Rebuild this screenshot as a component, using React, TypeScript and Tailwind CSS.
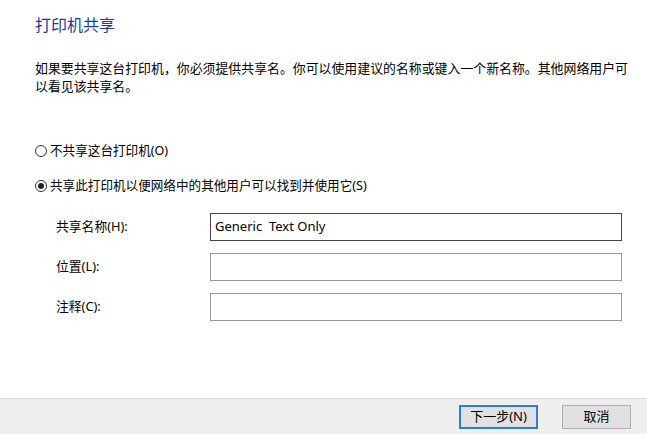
import React from "react";

const font = { fontFamily: '"Noto Sans", "Noto Sans CJK SC", sans-serif' };

function Radio({ checked }: { checked?: boolean }) {
  return (
    <span className="w-[12px] h-[12px] rounded-full border border-[#333] bg-white flex items-center justify-center shrink-0">
      {checked && <span className="w-[6px] h-[6px] rounded-full bg-[#222]" />}
    </span>
  );
}

function Field({ label, value, dark }: { label: string; value?: string; dark?: boolean }) {
  return (
    <div className="flex items-center h-[28px]">
      <div className="w-[210px] shrink-0 pl-[56px] text-[12.8px] text-black whitespace-nowrap">{label}</div>
      <div
        className={`w-[412px] h-[28px] border ${dark ? "border-[#444]" : "border-[#9a9a9a]"} bg-white flex items-center pl-[4px] text-[13px] text-black whitespace-pre`}
      >
        {value}
      </div>
    </div>
  );
}

export default function App() {
  return (
    <div className="w-[647px] h-[444px] bg-white flex flex-col" style={font}>
      <div className="flex-1 flex flex-col">
        <div className="pl-[35px] pt-[14px] text-[16px] leading-[22px] text-[#1c3c9c]">打印机共享</div>
        <div className="pl-[35px] mt-[23px] w-[640px] text-[12.9px] leading-[18px] text-black">
          如果要共享这台打印机，你必须提供共享名。你可以使用建议的名称或键入一个新名称。其他网络用户可以看见该共享名。
        </div>
        <div className="pl-[35px] mt-[46px] h-[20px] flex items-center gap-[3px] text-[12.6px] text-black">
          <Radio />
          <span>不共享这台打印机(O)</span>
        </div>
        <div className="pl-[35px] mt-[15px] h-[20px] flex items-center gap-[3px] text-[12.6px] text-black">
          <Radio checked />
          <span>共享此打印机以便网络中的其他用户可以找到并使用它(S)</span>
        </div>
        <div className="mt-[17px] flex flex-col gap-[12px]">
          <Field label="共享名称(H):" value="Generic  Text Only" dark />
          <Field label="位置(L):" />
          <Field label="注释(C):" />
        </div>
      </div>
      <div className="h-[36px] bg-[#efefef] border-t border-[#dcdcdc] flex items-center justify-end pr-[16px] gap-[24px]">
        <button className="w-[79px] h-[24px] border-2 border-[#2b7fd4] bg-[#e1e1e1] text-[13px] text-black flex items-center justify-center">
          下一步(N)
        </button>
        <button className="w-[69px] h-[24px] border border-[#adadad] bg-[#e1e1e1] text-[13px] text-black flex items-center justify-center">
          取消
        </button>
      </div>
      <div className="h-[10px] bg-white" />
    </div>
  );
}
